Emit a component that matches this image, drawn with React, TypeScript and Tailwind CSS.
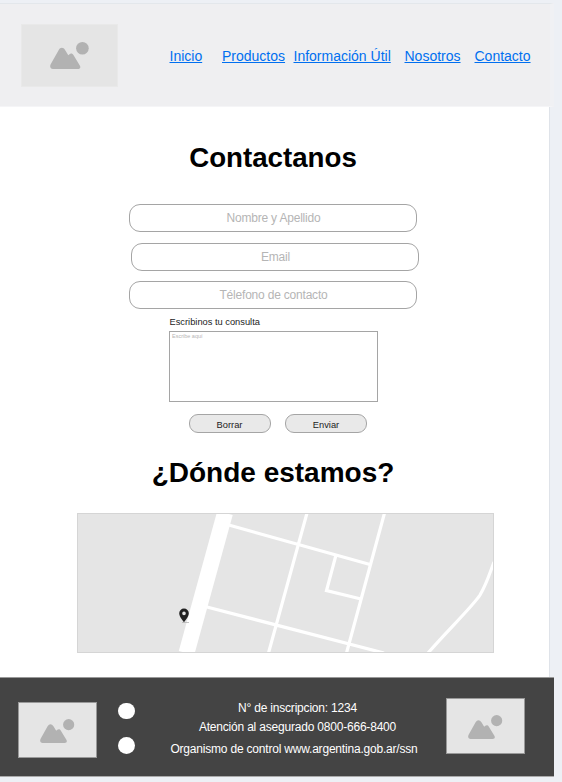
import React from "react";

function Placeholder({ className, iconClass }: { className: string; iconClass: string }) {
  return (
    <div className={`shrink-0 bg-[#e5e5e5] ${className}`}>
      <svg viewBox="0 0 39 27" className={iconClass} fill="#b2b2b2">
        <path d="M.7 22.2 8.600 8.200C10.400 5 13.200 5 15.200 8.200L18.300 13.200 19.200 12.400C20.900 11 22.500 11.400 23.600 13.200L29.800 23.500C31 25.600 30 27 27.800 27H3C.4 27-.5 24.600.7 22.200Z" />
        <circle cx="32.4" cy="6.3" r="6.3" />
      </svg>
    </div>
  );
}

const links = [
  { label: "Inicio", box: "w-[52.5px]" },
  { label: "Productos", box: "w-[71.5px]" },
  { label: "Información Útil", box: "w-[111px]" },
  { label: "Nosotros", box: "w-[70px]" },
  { label: "Contacto", box: "w-[60px]" },
];

const field =
  "block h-7 w-[288px] rounded-[11px] border border-[#a5a5a5] bg-white pl-[1px] text-center text-[12px] tracking-[-0.2px] placeholder:text-[#b5b5b5] placeholder:opacity-100";
const button =
  "flex h-[19px] w-[82px] items-center justify-center rounded-[9px] border border-[#a5a5a5] bg-[#e9e9e9] pt-[2px] text-[9.3px] leading-3 text-[#222]";

function StreetMap() {
  return (
    <svg viewBox="0 0 417 140" className="ml-[77px] mt-[24px] block h-[140px] w-[417px]" fill="none" stroke="#fff">
      <rect width="417" height="140" fill="#e5e5e5" stroke="none" />
      <path d="M148 0 109.5 140" strokeWidth="16" />
      <path
        d="M150 11.5 293 51.5M230 0 191.5 140M307.5 0 269.5 140M128 93.5 307 140M259 42 249.5 77.5 284 86M417 49C412 62 410 70 403 82 396 93 370 118 351 140"
        strokeWidth="3.2"
      />
      <path d="M105 109.500h7" stroke="#b5b5b5" strokeWidth=".8" />
      <path
        d="M107 95.500a4.800 4.800 0 0 0-4.800 4.800c0 3.500 4.800 9 4.800 9s4.800-5.500 4.800-9a4.800 4.800 0 0 0-4.800-4.800Zm0 3.100a1.800 1.800 0 1 1 0 3.600 1.800 1.800 0 0 1 0-3.600Z"
        fill="#222"
        fillRule="evenodd"
        stroke="none"
      />
      <rect x=".5" y=".5" width="416" height="139" stroke="#d5d5d5" />
    </svg>
  );
}

export default function App() {
  return (
    <div className="h-[782px] w-[562px] overflow-hidden bg-[#edf0f5] pt-[3px] font-['Liberation_Sans',Arial,sans-serif]">
      <header className="flex h-[104px] w-[554px] border-b border-r-4 border-t border-b-[#f5f5f7] border-r-[#f0f1f4] border-t-[#e3e7eb] bg-[#efeff1]">
        <Placeholder className="ml-[21px] mt-[20px] h-[63px] w-[97px] border border-[#e9e9e9]" iconClass="ml-[28px] mt-[17px] h-[27px] w-[39px]" />
        <nav className="ml-[51.5px] mt-[42px] flex h-5 text-sm leading-5 text-[#006ff0]">
          {links.map((l) => (
            <div key={l.label} className={`shrink-0 whitespace-nowrap ${l.box}`}>
              <a href="#" className="underline">{l.label}</a>
            </div>
          ))}
        </nav>
      </header>

      <main className="h-[570px] w-[550px] border-r border-[#dfe3e9] bg-white">
        <h1 className="w-[546px] pt-[35px] text-center text-[27.7px] font-bold leading-8">Contactanos</h1>
        <form className="mt-[30px]">
          <input placeholder="Nombre y Apellido" className={`ml-[129px] ${field}`} />
          <input placeholder="Email" className={`ml-[131px] mt-[11px] ${field}`} />
          <input placeholder="Télefono de contacto" className={`ml-[129px] mt-[10px] ${field}`} />
          <label className="ml-[169.5px] mt-[7px] block h-[15px] text-[9.3px] leading-[12px] text-[#222]">Escribinos tu consulta</label>
          <textarea
            placeholder="Escribe aquí"
            className="ml-[169px] block h-[71px] w-[209px] resize-none border border-[#a5a5a5] px-[2px] py-[1px] text-[5.5px] leading-[7px] placeholder:text-[#b5b5b5] placeholder:opacity-100"
          />
          <div className="ml-[188.5px] mt-[12px] flex gap-[14.5px]">
            <button type="button" className={button}>Borrar</button>
            <button type="button" className={button}>Enviar</button>
          </div>
        </form>
        <h2 className="mt-[24px] w-[546px] text-center text-[28px] font-bold leading-8">¿Dónde estamos?</h2>
        <StreetMap />
      </main>

      <footer className="flex h-[100px] w-[554px] border-y border-b-[#aaa] border-t-[#999] bg-[#444]">
        <Placeholder className="ml-[18px] mt-[24px] h-[56px] w-[79px] border border-[#999]" iconClass="ml-[21px] mt-[15.500px] h-[24px] w-[34.500px]" />
        <div className="ml-[21px] mt-[24.5px] flex flex-col gap-[18px]">
          <span className="size-[16.5px] rounded-full bg-white" />
          <span className="size-[16.5px] rounded-full bg-white" />
        </div>
        <div className="ml-[29.5px] mt-[22px] w-[260px] shrink-0 text-center text-[12px] leading-4 tracking-[-0.2px] text-white">
          <p className="pl-[7px]">N° de inscripcion: 1234</p>
          <p className="mt-[3px] pl-[7px]">Atención al asegurado 0800-666-8400</p>
          <p className="mt-[6px]">Organismo de control www.argentina.gob.ar/ssn</p>
        </div>
        <Placeholder className="ml-[22px] mt-[20px] h-[56px] w-[79px] border border-[#999]" iconClass="ml-[21px] mt-[15.500px] h-[24px] w-[34.500px]" />
      </footer>
    </div>
  );
}
